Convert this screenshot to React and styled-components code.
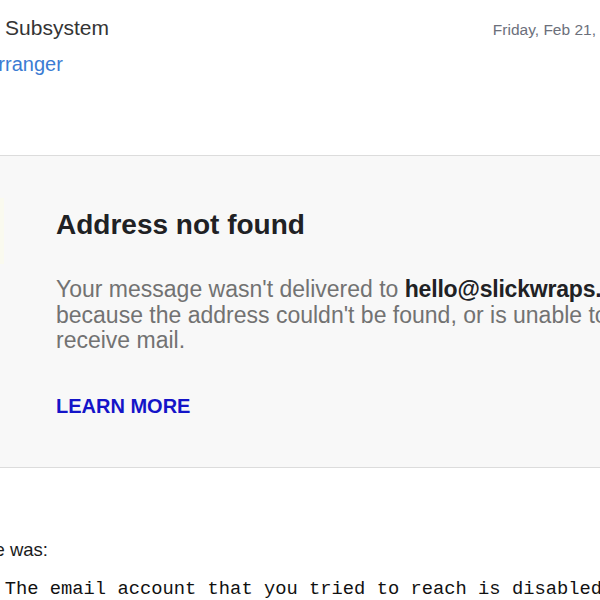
import React from "react";
import styled, { createGlobalStyle } from "styled-components";

const GlobalStyle = createGlobalStyle`
  html, body {
    margin: 0;
    padding: 0;
    background: #fff;
    overflow: hidden;
  }
  body {
    font-family: "Liberation Sans", Arial, sans-serif;
  }
`;

const Page = styled.div`
  width: 600px;
  height: 600px;
  padding-top: 16px;
  box-sizing: border-box;
`;

// header, wider than the window so the date runs off the right edge
const Header = styled.div`
  display: flex;
  align-items: baseline;
  width: 835px;
  margin-left: -121px;
  line-height: 24px;
`;

const Sender = styled.span`
  font-size: 21px;
  color: #343434;
  white-space: nowrap;
`;

const Date = styled.span`
  margin-left: auto;
  font-size: 15.5px;
  color: #6c707b;
  white-space: nowrap;
`;

const Recipient = styled.div`
  margin: 11px 0 0 -15px;
  font-size: 20px;
  line-height: 23px;
  color: #3b7cd3;
  white-space: nowrap;
`;

const Notice = styled.div`
  display: flex;
  align-items: flex-start;
  margin-top: 79px;
  padding: 42px 0 49px;
  background: #f8f8f8;
  border-top: 1px solid #dcdcdc;
  border-bottom: 1px solid #dcdcdc;
`;

const Icon = styled.div`
  flex-shrink: 0;
  width: 64px;
  height: 66px;
  margin-left: -60px;
  background: #fafaef;
`;

const Content = styled.div`
  margin-left: 52px;
  padding-top: 11px;
  white-space: nowrap;
`;

const Title = styled.h1`
  margin: 0;
  font-size: 28px;
  line-height: 32px;
  font-weight: 700;
  color: #202124;
`;

const Message = styled.p`
  margin: 36px 0 0;
  font-size: 23px;
  line-height: 25.5px;
  color: #727272;
`;

const Address = styled.b`
  color: #202124;
  letter-spacing: -0.2px;
`;

const LearnMore = styled.a`
  display: block;
  margin-top: 41px;
  font-size: 20px;
  line-height: 23px;
  font-weight: 700;
  color: #1414c8;
  text-decoration: none;
`;

// the line is cut at the left; keep its end where the window shows it
const Lead = styled.div`
  display: flex;
  justify-content: flex-end;
  width: 48px;
  margin-top: 71px;
  font-size: 18.5px;
  line-height: 21px;
  color: #1a1a1a;
  white-space: nowrap;
`;

const Response = styled.pre`
  margin: 19px 0 0 -108px;
  font-family: "Liberation Mono", "Courier New", monospace;
  font-size: 18.8px;
  line-height: 21px;
  color: #111;
`;

export default function App() {
  return (
    <>
      <GlobalStyle />
      <Page>
        <Header>
          <Sender>Mail Delivery Subsystem</Sender>
          <Date>Friday, Feb 21, 2020 at 3:12 PM</Date>
        </Header>
        <Recipient>Arranger</Recipient>

        <Notice>
          <Icon />
          <Content>
            <Title>Address not found</Title>
            <Message>
              Your message wasn't delivered to <Address>hello@slickwraps.com</Address>
              <br />
              because the address couldn't be found, or is unable to
              <br />
              receive mail.
            </Message>
            <LearnMore href="#">LEARN MORE</LearnMore>
          </Content>
        </Notice>

        <Lead>
          <span>The response was:</span>
        </Lead>
        <Response>550 5.2.1 The email account that you tried to reach is disabled.</Response>
      </Page>
    </>
  );
}
